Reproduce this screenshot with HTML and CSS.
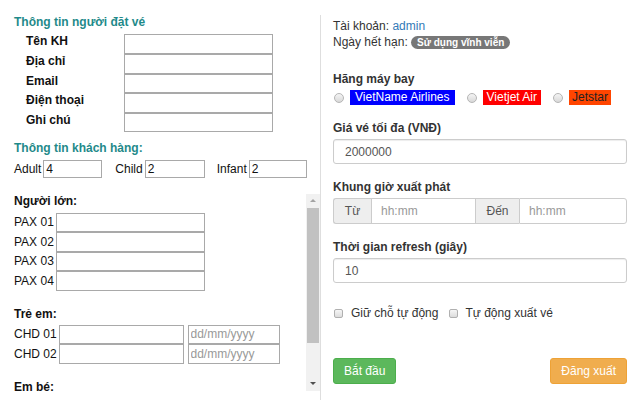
FILE: index.html
```html
<!DOCTYPE html>
<html lang="vi">
<head>
<meta charset="utf-8">
<title>Đặt vé</title>
<link rel="stylesheet" href="styles.css">
</head>
<body>
<div class="page">
  <div class="left">
    <div class="sec-title">Thông tin người đặt vé</div>
    <div class="info-grid">
      <label>Tên KH</label><input class="inp" type="text">
      <label>Địa chỉ</label><input class="inp" type="text">
      <label>Email</label><input class="inp" type="text">
      <label>Điện thoại</label><input class="inp" type="text">
      <label>Ghi chú</label><input class="inp" type="text">
    </div>
    <div class="sec-title t2">Thông tin khách hàng:</div>
    <div class="counts">
      <span class="cnt c-adult"><label>Adult</label><input class="inp num w-adult" type="text" value="4"></span>
      <span class="cnt c-child"><label>Child</label><input class="inp num w-child" type="text" value="2"></span>
      <span class="cnt c-inf"><label>Infant</label><input class="inp num w-inf" type="text" value="2"></span>
    </div>
    <div class="scrollbox">
      <div class="scroll-content">
        <div class="grp-title">Người lớn:</div>
        <div class="pax-grid">
          <label>PAX 01</label><input class="inp" type="text">
          <label>PAX 02</label><input class="inp" type="text">
          <label>PAX 03</label><input class="inp" type="text">
          <label>PAX 04</label><input class="inp" type="text">
        </div>
        <div class="grp-title">Trẻ em:</div>
        <div class="chd-grid">
          <label>CHD 01</label><input class="inp" type="text"><input class="inp date" type="text" placeholder="dd/mm/yyyy">
          <label>CHD 02</label><input class="inp" type="text"><input class="inp date" type="text" placeholder="dd/mm/yyyy">
        </div>
        <div class="grp-title">Em bé:</div>
      </div>
      <div class="scrollbar">
        <div class="sb-btn"><span class="arrow up"></span></div>
        <div class="sb-track"><div class="sb-thumb"></div></div>
        <div class="sb-btn"><span class="arrow down"></span></div>
      </div>
    </div>
  </div>

  <div class="right">
    <div class="line">Tài khoản: <a class="link">admin</a></div>
    <div class="line">Ngày hết hạn: <span class="badge">Sử dụng vĩnh viễn</span></div>

    <div class="flabel first">Hãng máy bay</div>
    <div class="airlines">
      <span class="radio"></span><span class="al al-vn">VietName Airlines</span>
      <span class="radio r2"></span><span class="al al-vj">Vietjet Air</span>
      <span class="radio r3"></span><span class="al al-js">Jetstar</span>
    </div>

    <div class="flabel">Giá vé tối đa (VNĐ)</div>
    <input class="fc" type="text" value="2000000">

    <div class="flabel">Khung giờ xuất phát</div>
    <div class="igroup">
      <span class="addon a-tu">Từ</span>
      <input class="gi gi1" type="text" placeholder="hh:mm">
      <span class="addon a-den">Đến</span>
      <input class="gi gi2" type="text" placeholder="hh:mm">
    </div>

    <div class="flabel">Thời gian refresh (giây)</div>
    <input class="fc" type="text" value="10">

    <div class="checks">
      <span class="cb"></span><span class="cbl">Giữ chỗ tự động</span>
      <span class="cb cb2"></span><span class="cbl cbl2">Tự động xuất vé</span>
    </div>

    <div class="buttons">
      <button class="btn btn-start">Bắt đầu</button>
      <button class="btn btn-out">Đăng xuất</button>
    </div>
  </div>
</div>
</body>
</html>
```
FILE: styles.css
```css
* { box-sizing: border-box; }
html, body { margin: 0; padding: 0; background: #fff; }
body {
  font-family: "Liberation Sans", Arial, sans-serif;
  font-size: 12px;
  color: #333;
  width: 640px;
  height: 400px;
  overflow: hidden;
}
.page { display: flex; height: 400px; }

/* LEFT */
.left { width: 320px; flex: none; display: flex; flex-direction: column; color: #111; }
.sec-title {
  color: #1f8a8a;
  font-weight: bold;
  line-height: 14px;
  margin: 15px 0 0 14px;
}
.sec-title.t2 { margin-top: 9px; }
.inp {
  font-family: "Liberation Sans", Arial, sans-serif;
  font-size: 12px;
  color: #111;
  border: 1px solid #a9a9a9;
  background: #fff;
  padding: 0 2px;
  margin: 0;
  width: 100%;
  height: 100%;
  min-width: 0;
  outline: none;
  display: block;
}
.inp::placeholder { color: #999; }
.info-grid {
  display: grid;
  grid-template-columns: 98px 149px;
  grid-template-rows: 20px 19.5px 19.5px 19.5px 19.5px;
  margin: 5px 0 0 26px;
}
.info-grid label { font-weight: bold; line-height: 14px; color: #111; }
.counts {
  display: flex;
  align-items: center;
  margin: 4.5px 0 0 14px;
  height: 18px;
}
.cnt { display: flex; align-items: center; gap: 2px; height: 18px; }
.c-child { margin-left: 13px; }
.c-inf { margin-left: 12px; }
.num { height: 18px; }
.w-adult { width: 59px; }
.w-child { width: 60px; }
.w-inf { width: 58px; }

.scrollbox {
  display: flex;
  margin-top: 16px;
  height: 199px;
}
.scroll-content { flex: 1; overflow: hidden; padding-left: 14px; }
.grp-title { font-weight: bold; line-height: 14px; margin-top: 16px; color: #111; }
.grp-title:first-child { margin-top: 0; }
.pax-grid {
  display: grid;
  grid-template-columns: 42px 149px;
  grid-template-rows: 19.5px 19.5px 19.5px 19.5px;
  align-items: center;
  margin-top: 5px;
}
.pax-grid .inp, .chd-grid .inp { height: 19.5px; }
.chd-grid {
  display: grid;
  grid-template-columns: 40.5px 125px 92px;
  column-gap: 4px;
  grid-template-rows: 19.5px 19.5px;
  align-items: center;
  margin-top: 4px;
}
.chd-grid label { white-space: nowrap; }
.chd-grid .date { color: #999; }

.scrollbar {
  width: 14px;
  flex: none;
  background: #f1f1f1;
  display: flex;
  flex-direction: column;
  margin-bottom: 2px;
}
.sb-btn { height: 14px; display: flex; align-items: center; justify-content: center; }
.arrow { width: 0; height: 0; border-left: 3px solid transparent; border-right: 3px solid transparent; }
.arrow.up { border-bottom: 3px solid #a3a3a3; }
.arrow.down { border-top: 3px solid #505050; }
.sb-track { flex: 1; padding: 0 1px; }
.sb-thumb { height: 135px; background: #c1c1c1; }

/* RIGHT */
.right {
  width: 320px;
  flex: none;
  min-width: 0;
  margin-top: 15px;
  border-left: 1px solid #dedede;
  padding: 3px 13px 0 12px;
  display: flex;
  flex-direction: column;
}
.line { line-height: 16px; white-space: nowrap; }
.link { color: #337ab7; text-decoration: none; }
.badge {
  display: inline-block;
  background: #777;
  color: #fff;
  font-weight: bold;
  font-size: 10px;
  line-height: 13px;
  height: 13px;
  padding: 0 6px;
  border-radius: 7px;
  vertical-align: 0px;
}
.flabel { font-weight: bold; line-height: 16px; margin-top: 15px; margin-bottom: 3px; white-space: nowrap; }
.flabel.first { margin-top: 21px; }
.airlines { display: flex; align-items: center; height: 15px; white-space: nowrap; }
.radio {
  width: 10px; height: 10px;
  flex: none;
  border: 1px solid #b5b5b5;
  border-radius: 50%;
  background: linear-gradient(#f4f4f4, #d8d8d8);
  margin-left: 1px;
}
.radio.r2 { margin-left: 12px; }
.radio.r3 { margin-left: 12px; }
.al { line-height: 15px; height: 15px; padding: 0 5px; margin-left: 6px; flex: none; }
.al-vn { background: #0000ff; color: #fff; }
.al-vj { background: #ff0000; color: #fff; padding: 0 4px; }
.al-js { background: #ff4500; color: #222; padding: 0 3px; }

.fc {
  display: block;
  width: 100%;
  min-width: 0;
  height: 25px;
  border: 1px solid #ccc;
  border-radius: 3px;
  padding: 0 11px;
  font-family: "Liberation Sans", Arial, sans-serif;
  font-size: 12px;
  color: #555;
  box-shadow: inset 0 1px 1px rgba(0,0,0,.075);
  outline: none;
}
.igroup { display: flex; height: 26px; }
.addon {
  background: #eee;
  border: 1px solid #ccc;
  color: #555;
  display: flex;
  align-items: center;
  justify-content: center;
  flex: none;
}
.a-tu { width: 38px; border-radius: 3px 0 0 3px; border-right: 0; }
.a-den { width: 43px; border-left: 0; border-right: 0; }
.gi {
  height: 26px;
  border: 1px solid #ccc;
  font-family: "Liberation Sans", Arial, sans-serif;
  font-size: 12px;
  color: #555;
  padding: 0 9px;
  outline: none;
  min-width: 0;
}
.gi::placeholder { color: #999; }
.gi1 { width: 105px; flex: none; }
.gi2 { flex: 1; width: 0; border-radius: 0 3px 3px 0; }

.checks { display: flex; align-items: center; margin-top: 22px; line-height: 16px; white-space: nowrap; }
.cb {
  width: 9px; height: 9px;
  flex: none;
  border: 1px solid #b0b0b0;
  border-radius: 2px;
  background: linear-gradient(#f6f6f6, #dcdcdc);
  margin-left: 1px;
}
.cbl { margin-left: 8px; }
.cb2 { margin-left: 11px; }
.cbl2 { margin-left: 7px; }

.buttons { display: flex; justify-content: space-between; margin-top: 37px; }
.btn {
  height: 26px;
  border-radius: 3px;
  color: #fff;
  font-family: "Liberation Sans", Arial, sans-serif;
  font-size: 12px;
  padding: 0 10px;
  border: 1px solid transparent;
  white-space: nowrap;
}
.btn-start { background: #5cb85c; border-color: #4cae4c; }
.btn-out { background: #f0ad4e; border-color: #eea236; }
```
